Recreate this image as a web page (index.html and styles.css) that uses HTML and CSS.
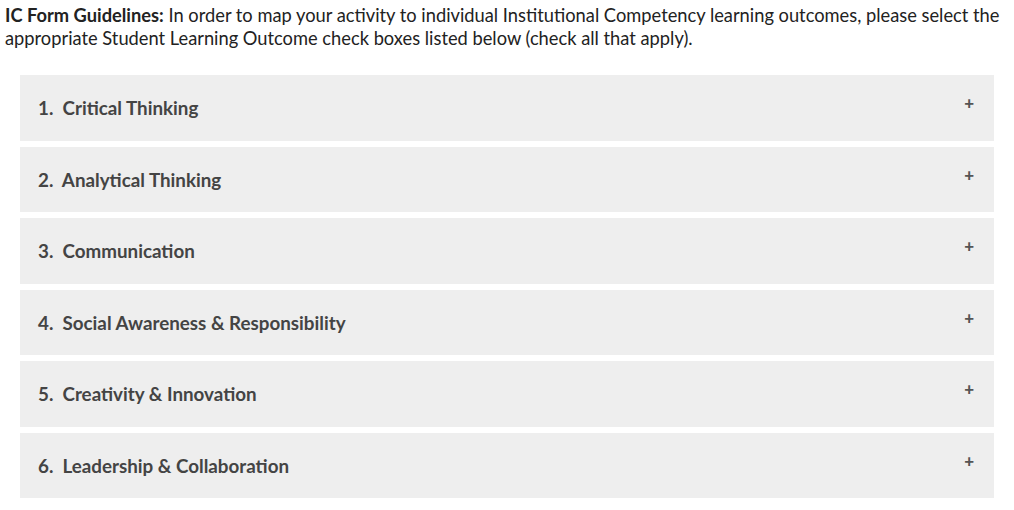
FILE: index.html
```html
<!DOCTYPE html>
<html lang="en">
<head>
    <meta charset="UTF-8">
    <meta name="viewport" content="width=device-width, initial-scale=1.0">
    <title>IC Form Guidelines</title>
    <link rel="stylesheet" href="styles.css">
</head>
<body>
    <p class="guidelines"><strong>IC Form Guidelines:</strong> In order to map your activity to individual Institutional Competency learning outcomes, please select the appropriate Student Learning Outcome check boxes listed below (check all that apply).</p>

    <div class="accordion">
        <div class="panel"><span class="panel-title">1.&nbsp; Critical Thinking</span><span class="toggle">+</span></div>
        <div class="panel"><span class="panel-title">2.&nbsp; Analytical Thinking</span><span class="toggle">+</span></div>
        <div class="panel"><span class="panel-title">3.&nbsp; Communication</span><span class="toggle">+</span></div>
        <div class="panel"><span class="panel-title">4.&nbsp; Social Awareness &amp; Responsibility</span><span class="toggle">+</span></div>
        <div class="panel"><span class="panel-title">5.&nbsp; Creativity &amp; Innovation</span><span class="toggle">+</span></div>
        <div class="panel"><span class="panel-title">6.&nbsp; Leadership &amp; Collaboration</span><span class="toggle">+</span></div>
    </div>
</body>
</html>
```

FILE: styles.css
```css
* { margin: 0; padding: 0; box-sizing: border-box; }
body { font-family: "Lato", "Noto Sans", sans-serif; background: #fff; color: #222; padding: 4px 5px; }
.guidelines { font-size: 18.3px; line-height: 23px; }
.guidelines strong { font-weight: 700; }
.accordion { margin: 25px 15px 0; display: flex; flex-direction: column; gap: 6px; }
.panel { background: #eeeeee; height: 65.5px; display: flex; align-items: center; justify-content: space-between; padding: 0 20px 0 18px; }
.panel-title { font-size: 18.8px; font-weight: 700; color: #444; }
.toggle { font-size: 17px; font-weight: 900; color: #555; align-self: flex-start; margin-top: 17px; }
```
